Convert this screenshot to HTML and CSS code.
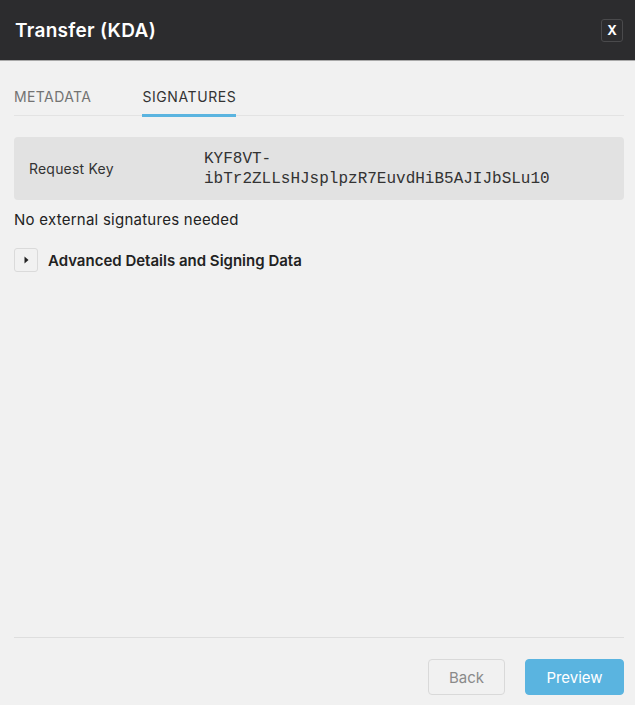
FILE: index.html
```html
<!DOCTYPE html>
<html lang="en">
<head>
  <meta charset="UTF-8">
  <title>Transfer (KDA)</title>
  <link rel="stylesheet" href="styles.css">
</head>
<body>
  <div class="modal">
    <div class="modal-header">
      <h2>Transfer (KDA)</h2>
      <button class="close-btn">X</button>
    </div>

    <div class="modal-body">
      <div class="tabs">
        <div class="tab">METADATA</div>
        <div class="tab active">SIGNATURES</div>
      </div>

      <div class="key-box">
        <div class="key-label">Request Key</div>
        <div class="key-value">KYF8VT-<br>ibTr2ZLLsHJsplpzR7EuvdHiB5AJIJbSLu10</div>
      </div>

      <p class="note">No external signatures needed</p>

      <div class="advanced">
        <span class="toggle">
          <svg width="8" height="10" viewBox="0 0 8 10"><path d="M2.5 1.5 L6.5 5 L2.5 8.5 Z" fill="#222"/></svg>
        </span>
        <span class="advanced-title">Advanced Details and Signing Data</span>
      </div>
    </div>

    <div class="modal-footer">
      <button class="btn back">Back</button>
      <button class="btn preview">Preview</button>
    </div>
  </div>
</body>
</html>
```

FILE: styles.css
```css
body {
  margin: 0;
  font-family: Inter, "Open Sans", Arial, sans-serif;
  background-color: #f1f1f1;
  color: #222;
}

.modal {
  width: 635px;
  height: 705px;
  display: flex;
  flex-direction: column;
  background-color: #f1f1f1;
}

.modal-header {
  height: 61px;
  box-sizing: border-box;
  background-color: #2c2c2e;
  border-bottom: 1px solid #a9a9a9;
  display: flex;
  align-items: center;
  justify-content: space-between;
  padding: 0 12px 0 15px;
}

.modal-header h2 {
  margin: 0;
  color: #fff;
  font-size: 19px;
  font-weight: 600;
  letter-spacing: 0.3px;
}

.close-btn {
  width: 22px;
  height: 23px;
  padding: 0;
  background-color: #2c2c2e;
  border: 1px solid #4a4a4c;
  border-radius: 3px;
  color: #fff;
  font-family: Inter, Arial, sans-serif;
  font-size: 13px;
  font-weight: 700;
  cursor: pointer;
}

.modal-body {
  flex: 1;
  padding: 0 11px 0 14px;
}

.tabs {
  display: flex;
  gap: 51px;
  margin-top: 27px;
  border-bottom: 1px solid #e3e3e3;
}

.tab {
  font-size: 14px;
  letter-spacing: 0.4px;
  color: #737373;
  padding-bottom: 9px;
  border-bottom: 3px solid transparent;
  margin-bottom: -2px;
}

.tab.active {
  color: #333;
  letter-spacing: 0.6px;
  border-bottom-color: #5ab4e0;
}

.key-box {
  margin-top: 21px;
  background-color: #e2e2e2;
  border-radius: 4px;
  display: flex;
  align-items: center;
  padding: 10px 15px;
  height: 63px;
  box-sizing: border-box;
}

.key-label {
  width: 175px;
  font-size: 14px;
  letter-spacing: 0.2px;
  color: #333;
}

.key-value {
  font-family: "Liberation Mono", "DejaVu Sans Mono", monospace;
  font-size: 16px;
  line-height: 20px;
  color: #333;
}

.note {
  margin: 10px 0 0;
  font-size: 15px;
  letter-spacing: 0.25px;
  color: #222;
}

.advanced {
  display: flex;
  align-items: center;
  gap: 10px;
  margin-top: 19px;
}

.toggle {
  width: 22px;
  height: 22px;
  border: 1px solid #dadada;
  border-radius: 3px;
  display: flex;
  align-items: center;
  justify-content: center;
}

.advanced-title {
  font-size: 15px;
  font-weight: 600;
  color: #222;
}

.modal-footer {
  margin: 0 11px 0 14px;
  border-top: 1px solid #dedede;
  display: flex;
  justify-content: flex-end;
  gap: 20px;
  padding: 21px 0 10px;
}

.btn {
  height: 36px;
  border-radius: 4px;
  font-family: Inter, Arial, sans-serif;
  font-size: 15px;
  cursor: pointer;
}

.back {
  width: 77px;
  background-color: #f1f1f1;
  border: 1px solid #d9d9d9;
  color: #8a8a8a;
}

.preview {
  width: 99px;
  background-color: #5ab4e0;
  border: 1px solid #5ab4e0;
  color: #fff;
}
```
